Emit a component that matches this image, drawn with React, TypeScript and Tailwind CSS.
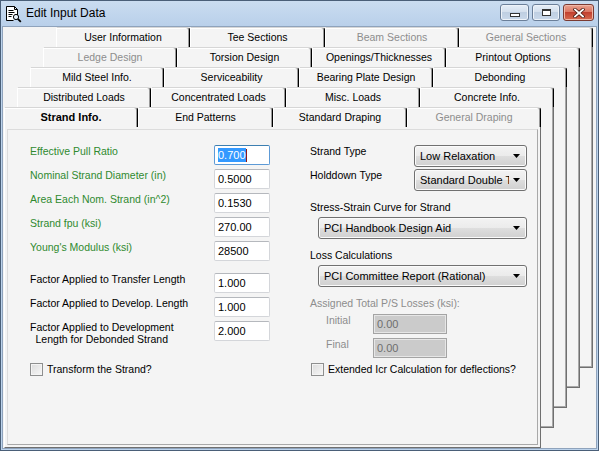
import React from 'react'

const SANS = "font-['Liberation_Sans',Arial,sans-serif]"

type Tab = { t: string; dis?: boolean; active?: boolean }

const rows: Tab[][] = [
  [{ t: 'User Information' }, { t: 'Tee Sections' }, { t: 'Beam Sections', dis: true }, { t: 'General Sections', dis: true }],
  [{ t: 'Ledge Design', dis: true }, { t: 'Torsion Design' }, { t: 'Openings/Thicknesses' }, { t: 'Printout Options' }],
  [{ t: 'Mild Steel Info.' }, { t: 'Serviceability' }, { t: 'Bearing Plate Design' }, { t: 'Debonding' }],
  [{ t: 'Distributed Loads' }, { t: 'Concentrated Loads' }, { t: 'Misc. Loads' }, { t: 'Concrete Info.' }],
  [{ t: 'Strand Info.', active: true }, { t: 'End Patterns' }, { t: 'Standard Draping' }, { t: 'General Draping', dis: true }],
]

// each page sits 13px left and 20px lower than the one behind it
const pageOffsets = [
  'ml-[53px] mt-0',
  'ml-[40px] mt-[20px]',
  'ml-[27px] mt-[40px]',
  'ml-[14px] mt-[60px]',
  'ml-[1px] mt-[80px]',
]
const tabWidths = ['w-[134px]', 'w-[135px]', 'w-[134px]', 'w-[134px]']

function TabStrip({ tabs }: { tabs: Tab[] }) {
  return (
    <div className="flex h-[20px]">
      {tabs.map((tab, i) => (
        <div
          key={tab.t}
          className={`${tabWidths[i]} flex items-center justify-center rounded-tr-[3px] bg-[#f4f4f4] border-t border-t-[#d6d6d6] border-l border-l-white border-r border-r-black shadow-[inset_-1px_0_0_#9a9a9a,inset_0_1px_0_#ffffff] leading-[13px] ${
            tab.active ? 'font-bold text-[11px] text-black' : tab.dis ? 'text-[10.5px] text-[#8d8d8d]' : 'text-[10.5px] text-black'
          }`}
        >
          {tab.t}
        </div>
      ))}
    </div>
  )
}

function TextBox({ value, focused, w = 'w-[56px]' }: { value: string; focused?: boolean; w?: string }) {
  return (
    <div
      className={`${w} h-[20px] shrink-0 flex items-center pl-[3px] bg-white rounded-[2px] border text-[11px] text-black ${
        focused ? 'border-[#5d9ad6] border-t-[#3c7fb1]' : 'border-[#d4d6da] border-t-[#b5b8bd]'
      }`}
    >
      {focused ? (
        <>
          <span className="bg-[#3399ff] text-white leading-[14px]">{value}</span>
          <span className="w-px h-[13px] bg-[#8b1a1a]" />
        </>
      ) : (
        value
      )}
    </div>
  )
}

function DisabledBox({ value }: { value: string }) {
  return (
    <div className="w-[74px] h-[20px] shrink-0 flex items-center pl-[3px] bg-[#cbcbcb] border border-[#a4a4a4] shadow-[inset_0_0_0_1px_#e6e6e6] text-[11px] text-[#6e6e6e]">
      {value}
    </div>
  )
}

function Combo({ value, w, className = '' }: { value: string; w: string; className?: string }) {
  return (
    <div
      className={`${w} ${className} h-[22px] shrink-0 flex items-center rounded-[3px] border border-[#707070] bg-[linear-gradient(#f3f3f3,#ebebeb_50%,#dedede_50%,#d0d0d0)] shadow-[inset_0_0_0_1px_#fbfbfb] pl-[5px] pr-[6px]`}
    >
      <span className="flex-1 overflow-hidden whitespace-nowrap text-[11px] text-black leading-[13px] mr-[4px]">{value}</span>
      <svg width="7" height="4" viewBox="0 0 7 4" className="shrink-0">
        <path d="M0 0h7L3.5 4z" fill="#000" />
      </svg>
    </div>
  )
}

function CheckBox({ label }: { label: string }) {
  return (
    <div className="flex items-center h-[13px] gap-[4px]">
      <div className="w-[13px] h-[13px] border border-[#8e8f8f] bg-[linear-gradient(135deg,#dcdcdc,#f7f7f7)] shadow-[inset_0_0_0_1px_#f4f4f4]" />
      <span className="text-[10.5px] leading-[13px] text-black">{label}</span>
    </div>
  )
}

function LabelRow({ label, value, green, focused }: { label: string; value: string; green?: boolean; focused?: boolean }) {
  return (
    <div className="flex items-start h-[24px]">
      <span className={`w-[184px] text-[10.5px] leading-[13px] ${green ? 'text-[#2f8a2f]' : 'text-black'}`}>{label}</span>
      <TextBox value={value} focused={focused} />
    </div>
  )
}

function StrandForm() {
  return (
    <div className="flex pl-[22px] pt-[15px]">
      <div className="w-[240px] flex flex-col">
        <LabelRow label="Effective Pull Ratio" value="0.700" green focused />
        <LabelRow label="Nominal Strand Diameter (in)" value="0.5000" green />
        <LabelRow label="Area Each Nom. Strand (in^2)" value="0.1530" green />
        <LabelRow label="Strand fpu (ksi)" value="270.00" green />
        <LabelRow label="Young's Modulus (ksi)" value="28500" green />
        <div className="mt-[8px]">
          <LabelRow label="Factor Applied to Transfer Length" value="1.000" />
          <LabelRow label="Factor Applied to Develop. Length" value="1.000" />
          <div className="flex items-start h-[24px]">
            <div className="w-[184px]">
              <span className="inline-block text-center text-[10.5px] leading-[12px] text-black">
                Factor Applied to Development
                <br />
                Length for Debonded Strand
              </span>
            </div>
            <TextBox value="2.000" />
          </div>
        </div>
        <div className="mt-[18px]">
          <CheckBox label="Transform the Strand?" />
        </div>
      </div>

      <div className="ml-[40px] w-[217px] flex flex-col">
        <div className="flex items-start h-[24px]">
          <span className="w-[104px] text-[10.5px] leading-[13px]">Strand Type</span>
          <Combo value="Low Relaxation" w="w-[113px]" />
        </div>
        <div className="flex items-start h-[24px]">
          <span className="w-[104px] text-[10.5px] leading-[13px]">Holddown Type</span>
          <Combo value="Standard Double Tee" w="w-[113px]" />
        </div>
        <span className="mt-[8px] text-[10.5px] leading-[13px]">Stress-Strain Curve for Strand</span>
        <Combo value="PCI Handbook Design Aid" w="w-[209px]" className="mt-[3px] ml-[8px]" />
        <span className="mt-[10px] text-[10.5px] leading-[13px]">Loss Calculations</span>
        <Combo value="PCI Committee Report (Rational)" w="w-[209px]" className="mt-[3px] ml-[8px]" />
        <span className="mt-[10px] text-[10.5px] leading-[13px] text-[#8d8d8d]">Assigned Total P/S Losses (ksi):</span>
        <div className="mt-[4px] flex items-start">
          <span className="ml-[16px] w-[47px] text-[10.5px] leading-[13px] text-[#8d8d8d]">Initial</span>
          <DisabledBox value="0.00" />
        </div>
        <div className="mt-[4px] flex items-start">
          <span className="ml-[16px] w-[47px] text-[10.5px] leading-[13px] text-[#8d8d8d]">Final</span>
          <DisabledBox value="0.00" />
        </div>
        <div className="mt-[5px] ml-[1px]">
          <CheckBox label="Extended Icr Calculation for deflections?" />
        </div>
      </div>
    </div>
  )
}

function TitleIcon() {
  return (
    <svg width="17" height="18" viewBox="0 0 17 18">
      <path d="M2 2h7.3l2.7 2.7V11H8.5v4H2z" fill="#fff" />
      <path d="M1.5 1.5h8l3 3v6M1.5 1.5v14h7M9.5 1.5v3h3" fill="none" stroke="#000" />
      <path d="M3.5 5.5h5M3.5 7.5h6M3.5 9.5h4M3.5 11.5h3" stroke="#000" />
      <circle cx="11" cy="12" r="2.6" fill="#e8f2fb" stroke="#000" />
      <path d="M12.8 13.8l3 3" stroke="#000" strokeWidth="1.8" />
    </svg>
  )
}

export default function App() {
  return (
    <div className={`${SANS} w-[599px] h-[451px] flex flex-col bg-[#bcd3ec] border border-[#4a5f78] text-black`}>
      {/* title bar */}
      <div className="h-[25px] shrink-0 flex items-start bg-[linear-gradient(#cadcf0,#b9d0ea)]">
        <div className="ml-[4px] mt-[4px]">
          <TitleIcon />
        </div>
        <span className="ml-[4px] mt-[5px] text-[12px] leading-[15px] text-black">Edit Input Data</span>
        <div className="ml-auto mr-[4px] mt-[3px] flex gap-[3px]">
          <div className="w-[29px] h-[17px] rounded-[3px] border border-[#6b7f99] bg-[linear-gradient(#e6eef8,#d2deec_50%,#bfcfe2_50%,#c9d8ea)] shadow-[inset_0_0_0_1px_#eef3f9] flex items-end justify-center pb-[3px]">
            <div className="w-[10px] h-[4px] border border-[#333] bg-white" />
          </div>
          <div className="w-[28px] h-[17px] rounded-[3px] border border-[#6b7f99] bg-[linear-gradient(#e6eef8,#d2deec_50%,#bfcfe2_50%,#c9d8ea)] shadow-[inset_0_0_0_1px_#eef3f9] flex items-center justify-center">
            <div className="w-[9px] h-[7px] border border-[#333] border-t-2 bg-white" />
          </div>
          <div className="w-[31px] h-[17px] rounded-[3px] border border-[#7a3a32] bg-[linear-gradient(#eaa28f,#d9725f_50%,#c2402f_50%,#d66a4f)] shadow-[inset_0_0_0_1px_#f0b8a8] flex items-center justify-center">
            <svg width="12" height="10" viewBox="0 0 12 10">
              <path d="M2 1.5l8 7M10 1.5l-8 7" stroke="#4a1a12" strokeWidth="3.4" strokeLinecap="square" />
              <path d="M2 1.5l8 7M10 1.5l-8 7" stroke="#fff" strokeWidth="1.8" strokeLinecap="square" />
            </svg>
          </div>
        </div>
      </div>

      {/* client area */}
      <div className="flex-1 mx-[1px] mb-[1px] border border-[#8fa3bc] bg-[#f4f4f4] overflow-hidden">
        <div className="grid">
          {rows.slice(0, 4).map((tabs, i) => (
            <div key={i} className={`col-start-1 row-start-1 w-[537px] h-[341px] flex flex-col ${pageOffsets[i]}`}>
              <TabStrip tabs={tabs} />
              <div className="flex-1 bg-[#f4f4f4] border-r border-b border-[#6f6f6f] shadow-[inset_-1px_-1px_0_#a8a8a8]" />
            </div>
          ))}
          <div className={`col-start-1 row-start-1 w-[537px] h-[341px] flex flex-col ${pageOffsets[4]}`}>
            <TabStrip tabs={rows[4]} />
            <div className="flex-1 flex flex-col bg-[#f4f4f4] border-l border-l-white border-r border-b border-r-[#6f6f6f] border-b-[#6f6f6f]">
              <div className="flex-1 m-[2px] border border-[#dcdcdc] border-r-[#a8a8a8] border-b-[#a8a8a8]">
                <StrandForm />
              </div>
            </div>
          </div>
        </div>
      </div>
    </div>
  )
}
